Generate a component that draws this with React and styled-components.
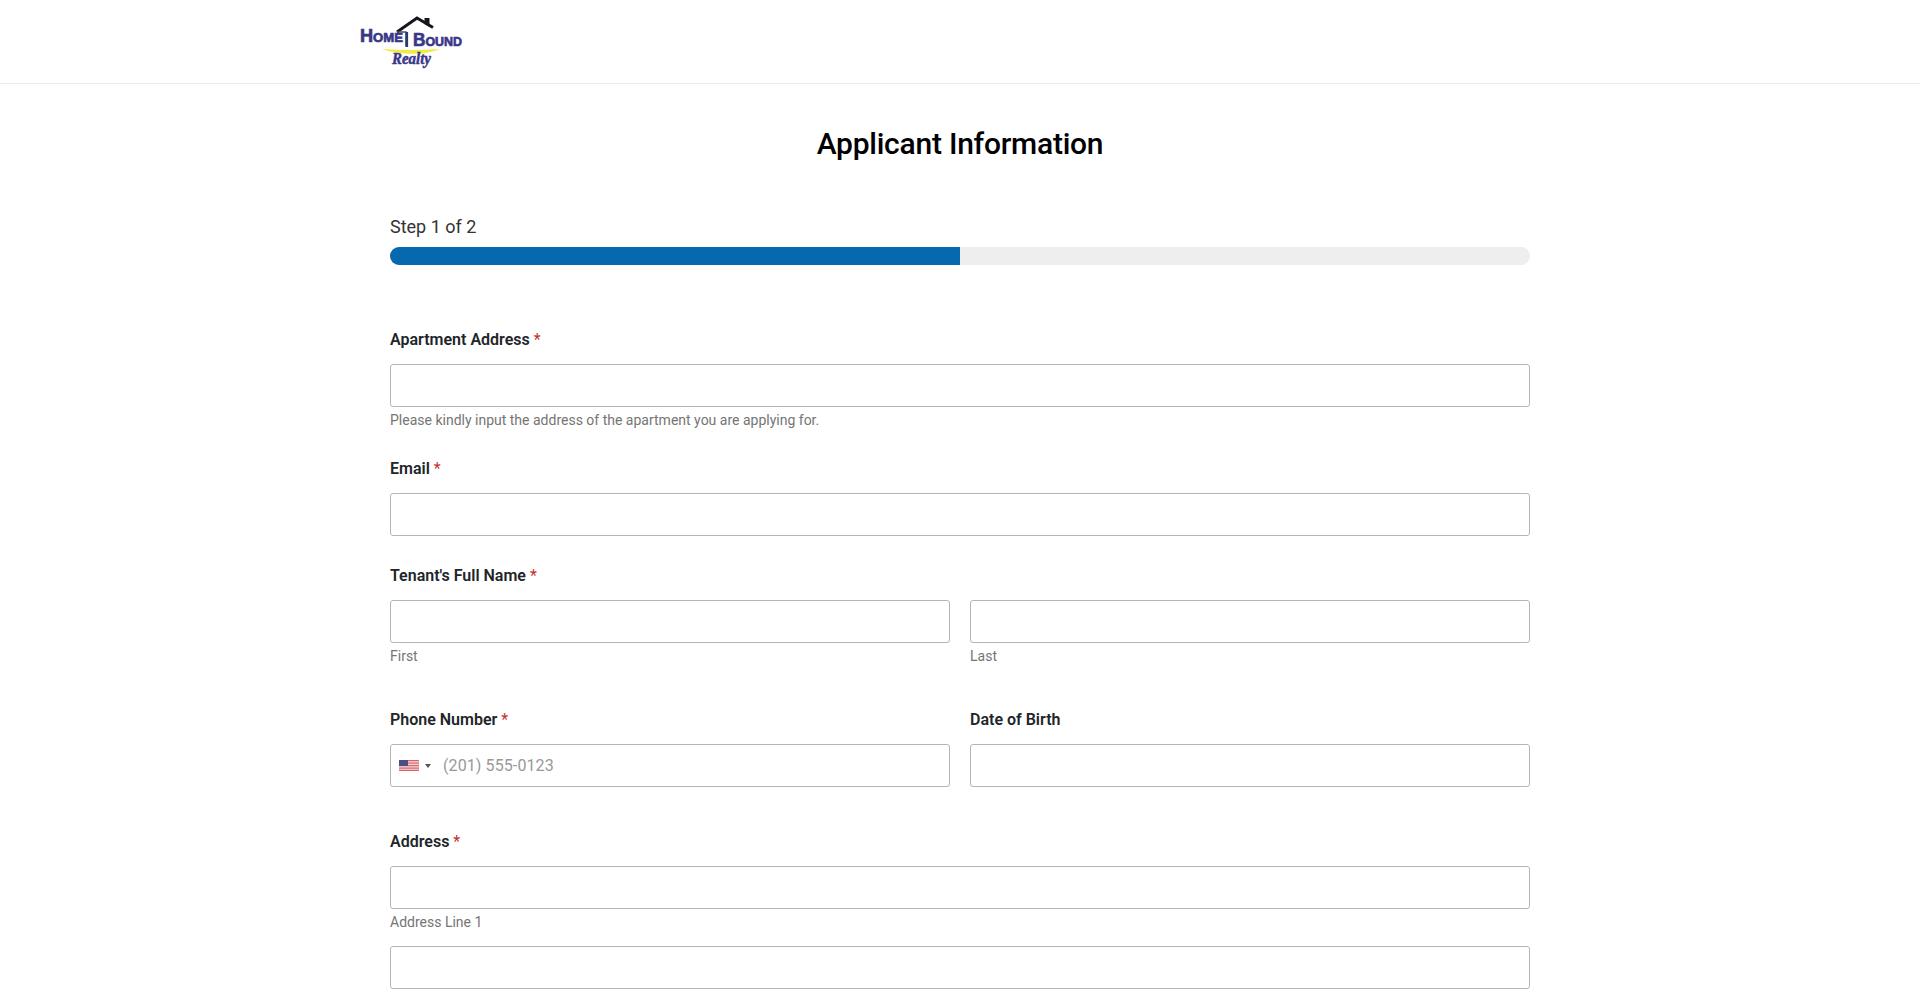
import React from 'react';
import styled, { createGlobalStyle } from 'styled-components';

const Global = createGlobalStyle`
  html, body { margin: 0; padding: 0; background: #fff; }
  html { overflow: hidden; height: 100%; }
  body { font-family: Roboto, "Liberation Sans", sans-serif; color: #212529; }
  * { box-sizing: border-box; }
`;

const Header = styled.header`
  height: 84px;
  border-bottom: 1px solid #e9e9e9;
  padding: 14px 0 0 360px;
`;

const Main = styled.main`
  width: 1140px;
  margin: 0 auto;
`;

const Title = styled.h1`
  margin: 39px 0 0;
  font-size: 30px;
  line-height: 42px;
  font-weight: 500;
  letter-spacing: -0.24px;
  text-align: center;
  color: #000;
`;

const StepLabel = styled.div`
  margin-top: 50px;
  font-size: 18px;
  line-height: 24px;
  color: #333;
`;

const Track = styled.div`
  margin-top: 8px;
  height: 18px;
  border-radius: 9px;
  background: #eeeeee;
  overflow: hidden;
`;

const Fill = styled.div`
  height: 100%;
  background: #0769ad;
`;

const Field = styled.div`
  margin-top: ${p => p.$top}px;
  min-width: 0;
`;

const Label = styled.label`
  display: block;
  padding-top: 1px;
  font-size: 16px;
  line-height: 22px;
  font-weight: 600;
  color: #212529;
  margin-bottom: 13px;
`;

const Req = styled.span`
  color: #c53030;
  font-weight: 400;
`;

const Input = styled.input`
  display: block;
  width: 100%;
  height: 43px;
  border: 1px solid #b5b5b5;
  border-radius: 3px;
  background: #fff;
  outline: none;
`;

const Help = styled.div`
  margin-top: 4px;
  font-size: 14px;
  line-height: 18px;
  color: #757575;
`;

const Columns = styled.div`
  display: grid;
  grid-template-columns: 1fr 1fr;
  column-gap: 20px;
  margin-top: ${p => p.$top || 0}px;
`;

const PhoneBox = styled.div`
  display: flex;
  align-items: center;
  height: 43px;
  border: 1px solid #b5b5b5;
  border-radius: 3px;
  padding-left: 8px;
`;

const Caret = styled.span`
  width: 0;
  height: 0;
  margin: 0 12px 0 6px;
  border-left: 3px solid transparent;
  border-right: 3px solid transparent;
  border-top: 4px solid #555;
`;

const PhoneInput = styled.input`
  flex: 1;
  min-width: 0;
  border: 0;
  outline: none;
  padding: 0;
  font-family: inherit;
  font-size: 16px;
  letter-spacing: 0.1px;
  &::placeholder { color: #999; opacity: 1; }
`;

const LogoSvg = styled.svg`
  display: block;
  width: 104px;
  height: 56px;
  overflow: visible;
`;

const Logo = () => (
  <LogoSvg viewBox="0 0 104 56" aria-label="HomeBound Realty">
    <path d="M37 18 L57 4 L73 13.5" fill="none" stroke="#16161c" strokeWidth="3" />
    <path d="M64.5 4h5v9l-5-3z" fill="#16161c" />
    <path d="M37 18h9v14" fill="none" stroke="#4a5068" strokeWidth="1.4" />
    <rect x="45.5" y="18" width="2.6" height="15" fill="#2f3a66" />
    <text x="0" y="28" textLength="43" lengthAdjust="spacingAndGlyphs" fontFamily="'Liberation Sans', sans-serif" fontWeight="700" fontSize="18" fill="#3a3788" stroke="#3a3788" strokeWidth=".7">
      H<tspan fontSize="13">OME</tspan>
    </text>
    <text x="53" y="32" textLength="49" lengthAdjust="spacingAndGlyphs" fontFamily="'Liberation Sans', sans-serif" fontWeight="700" fontSize="18" fill="#3a3788" stroke="#3a3788" strokeWidth=".7">
      B<tspan fontSize="13">OUND</tspan>
    </text>
    <path d="M22 35 Q50 37 80 35 Q66 41 46 39.5 Q30 38 22 35z" fill="#f2ea3c" />
    <text x="32" y="50" textLength="39" lengthAdjust="spacingAndGlyphs" fontFamily="'Liberation Serif', serif" fontStyle="italic" fontWeight="700" fontSize="16" fill="#3a3788" stroke="#3a3788" strokeWidth=".5">
      Realty
    </text>
  </LogoSvg>
);

const Flag = () => (
  <svg width="20" height="11" viewBox="0 0 20 11" aria-hidden="true">
    <rect width="20" height="11" fill="#f3d6d8" />
    <rect y="0" width="20" height="1.2" fill="#d9646c" />
    <rect y="2.5" width="20" height="1.2" fill="#d9646c" />
    <rect y="5" width="20" height="1.2" fill="#d9646c" />
    <rect y="7.5" width="20" height="1.2" fill="#d9646c" />
    <rect y="9.8" width="20" height="1.2" fill="#d9646c" />
    <rect width="9" height="6" fill="#4a4f8c" />
  </svg>
);

export default function App() {
  return (
    <>
      <Global />
      <Header><Logo /></Header>
      <Main>
        <Title>Applicant Information</Title>
        <StepLabel>Step 1 of 2</StepLabel>
        <Track><Fill style={{ width: '50%' }} /></Track>

        <Field $top={63}>
          <Label>Apartment Address <Req>*</Req></Label>
          <Input />
          <Help>Please kindly input the address of the apartment you are applying for.</Help>
        </Field>

        <Field $top={28}>
          <Label>Email <Req>*</Req></Label>
          <Input />
        </Field>

        <Field $top={28}>
          <Label>Tenant's Full Name <Req>*</Req></Label>
          <Columns>
            <div><Input /><Help>First</Help></div>
            <div><Input /><Help>Last</Help></div>
          </Columns>
        </Field>

        <Columns $top={43}>
          <Field $top={0}>
            <Label>Phone Number <Req>*</Req></Label>
            <PhoneBox>
              <Flag /><Caret />
              <PhoneInput placeholder="(201) 555-0123" />
            </PhoneBox>
          </Field>
          <Field $top={0}>
            <Label>Date of Birth</Label>
            <Input />
          </Field>
        </Columns>

        <Field $top={43}>
          <Label>Address <Req>*</Req></Label>
          <Input />
          <Help>Address Line 1</Help>
        </Field>
        <Field $top={15}>
          <Input />
        </Field>
      </Main>
    </>
  );
}
